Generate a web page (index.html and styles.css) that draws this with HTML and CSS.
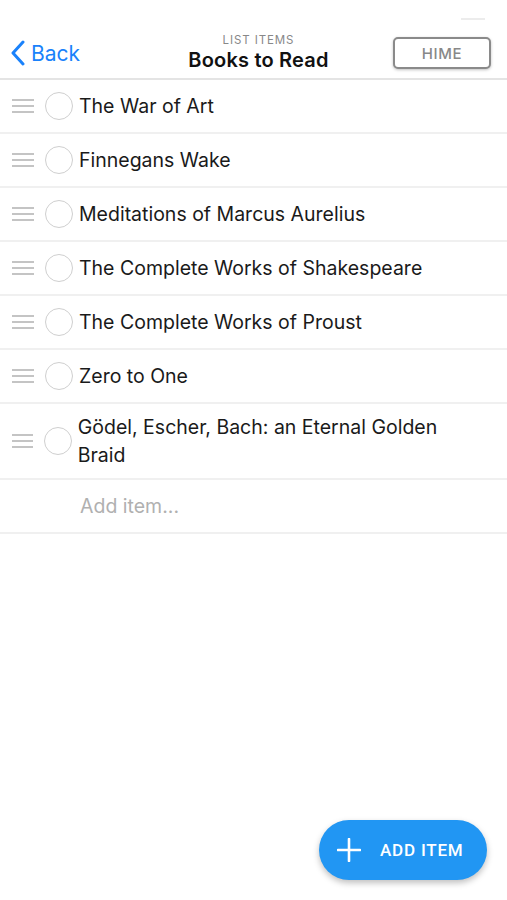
FILE: index.html
```html
<!DOCTYPE html>
<html>
<head>
<meta charset="utf-8">
<link rel="stylesheet" href="styles.css">
</head>
<body>
<div class="app">
  <header class="nav">
    <div class="topline"></div>
    <div class="navrow">
      <a class="back">
        <svg width="16" height="26" viewBox="0 0 16 26"><path d="M13 2 L3 13 L13 24" fill="none" stroke="#1a82fb" stroke-width="3" stroke-linecap="round" stroke-linejoin="round"/></svg>
        <span>Back</span>
      </a>
      <div class="title">
        <div class="subtitle">LIST ITEMS</div>
        <div class="main-title">Books to Read</div>
      </div>
      <button class="hime">HIME</button>
    </div>
  </header>
  <ul class="list">
    <li class="row"><span class="handle"><i></i><i></i><i></i></span><span class="check"></span><span class="text">The War of Art</span></li>
    <li class="row"><span class="handle"><i></i><i></i><i></i></span><span class="check"></span><span class="text">Finnegans Wake</span></li>
    <li class="row"><span class="handle"><i></i><i></i><i></i></span><span class="check"></span><span class="text">Meditations of Marcus Aurelius</span></li>
    <li class="row"><span class="handle"><i></i><i></i><i></i></span><span class="check"></span><span class="text">The Complete Works of Shakespeare</span></li>
    <li class="row"><span class="handle"><i></i><i></i><i></i></span><span class="check"></span><span class="text">The Complete Works of Proust</span></li>
    <li class="row"><span class="handle"><i></i><i></i><i></i></span><span class="check"></span><span class="text">Zero to One</span></li>
    <li class="row tall"><span class="handle"><i></i><i></i><i></i></span><span class="check"></span><span class="text">Gödel, Escher, Bach: an Eternal Golden Braid</span></li>
    <li class="row add"><span class="placeholder">Add item...</span></li>
  </ul>
  <button class="fab">
    <svg width="24" height="24" viewBox="0 0 24 24"><path d="M12 1 V23 M1 12 H23" stroke="#fff" stroke-width="2.6" stroke-linecap="round"/></svg>
    <span>ADD ITEM</span>
  </button>
</div>
</body>
</html>
```
FILE: styles.css
```css
* { box-sizing: border-box; }
html, body { margin: 0; padding: 0; background: #fff; }
body { font-family: Roboto, "Liberation Sans", sans-serif; color: #111; }
.app { width: 507px; height: 900px; position: relative; overflow: hidden; }
.nav { height: 80px; border-bottom: 2px solid #e4e4e4; position: relative; }
.topline { position: absolute; left: 461px; top: 18px; width: 24px; height: 2px; background: #ececec; }
.navrow { display: flex; align-items: center; justify-content: space-between; padding: 30px 16px 0 10px; height: 78px; }
.back { display: flex; align-items: center; gap: 5px; color: #1a82fb; font-size: 21px; font-family: Inter, "Liberation Sans", sans-serif; width: 110px; padding-top: 12px; margin-top: -14px; }
.back svg { display: block; }
.title { display: flex; flex-direction: column; align-items: center; margin-left: 4px; margin-top: -2px; }
.subtitle { font-size: 11.5px; letter-spacing: 0.9px; color: #888; font-family: Inter, "Liberation Sans", sans-serif; line-height: 14px; }
.main-title { font-size: 20px; font-weight: 600; color: #111; font-family: Inter, "Liberation Sans", sans-serif; line-height: 26px; letter-spacing: 0.2px; }
.hime { width: 98px; height: 32px; border: 2px solid #8a8a8a; border-radius: 5px; background: #fff; color: #888; font-size: 15px; font-family: Inter, "Liberation Sans", sans-serif; font-weight: 500; letter-spacing: 0.6px; box-shadow: 0 1px 3px rgba(0,0,0,0.25); margin-top: -2px; padding: 0; }
.list { list-style: none; margin: 0; padding: 0; }
.row { display: flex; align-items: center; min-height: 54px; border-bottom: 2px solid #f0f0f0; padding-left: 12px; }
.row.tall { min-height: 76px; padding-top: 8px; padding-bottom: 8px; }
.handle { display: flex; flex-direction: column; gap: 4px; width: 22px; }
.handle i { display: block; height: 2px; background: #c4c4c4; }
.check { width: 28px; height: 28px; border-radius: 50%; border: 1.5px solid #cfcfcf; margin-left: 11px; flex-shrink: 0; }
.text { margin-left: 6px; font-size: 19.5px; font-family: Inter, "Liberation Sans", sans-serif; color: #1a1a1a; line-height: 28px; padding-right: 40px; }
.row.add { padding-left: 80px; }
.placeholder { font-size: 19.5px; font-family: Inter, "Liberation Sans", sans-serif; color: #b0b0b0; }
.fab { position: absolute; left: 319px; top: 820px; width: 168px; height: 60px; border-radius: 30px; border: none; background: #2196f3; color: #fff; display: flex; align-items: center; padding: 0 0 0 18px; gap: 19px; box-shadow: 0 3px 6px rgba(0,0,0,0.25); font-family: Roboto, "Liberation Sans", sans-serif; font-size: 17px; font-weight: 500; letter-spacing: 0.8px; }
```
